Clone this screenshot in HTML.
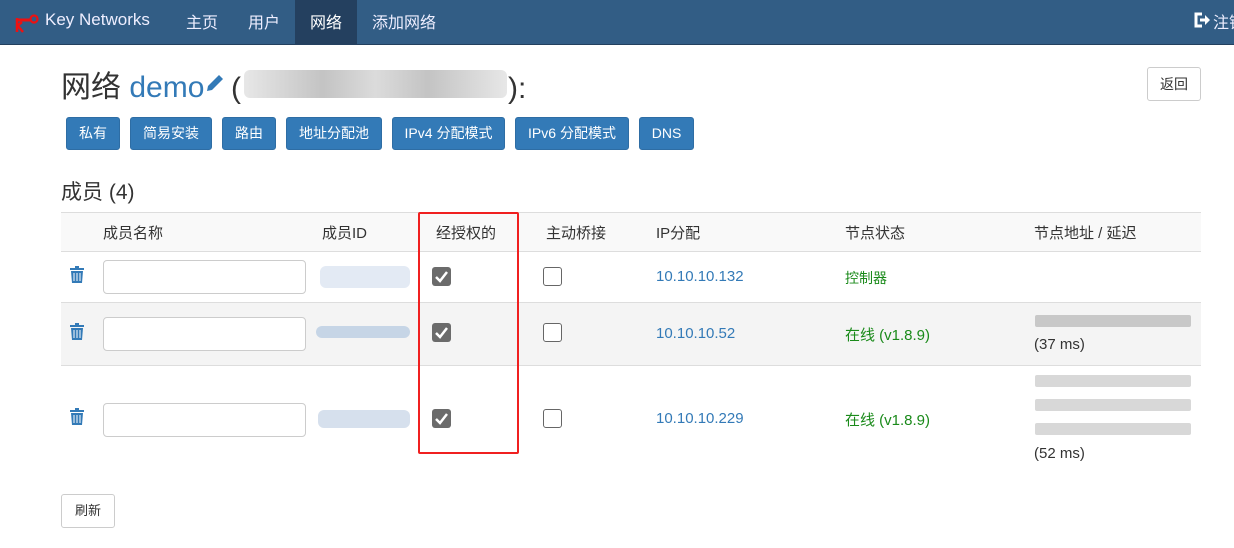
<!DOCTYPE html>
<html><head><meta charset="utf-8"><style>
*{box-sizing:border-box;margin:0;padding:0}
body{width:1234px;height:548px;overflow:hidden;background:#fff;font-family:"Liberation Sans","Noto Sans CJK SC",sans-serif;font-size:15px;color:#333;position:relative}
.a{position:absolute;white-space:nowrap}
.nav{position:absolute;left:0;top:0;width:1234px;height:45px;background:#325d85;border-bottom:1px solid #23405e}
.nav .t{position:absolute;top:9px;color:#eef;font-size:17px;white-space:nowrap}
.btn{position:absolute;top:117px;height:33px;background:#337ab7;border:1px solid #2e6da4;border-radius:3px;color:#fff;font-size:14px;text-align:center;line-height:31px}
.wb{position:absolute;background:#fff;border:1px solid #ccc;border-radius:3px;font-size:14px;text-align:center;color:#333}
.inp{position:absolute;left:103px;width:203px;height:34px;border:1px solid #ccc;border-radius:4px;background:#fff}
.cb{position:absolute;width:19px;height:19px;border-radius:3px}
.cb.on{background:#6b6b6b}
.cb.off{border:1.5px solid #666;background:#fff}
.blur{position:absolute;border-radius:6px}
.ip{position:absolute;color:#337ab7;font-size:15px}
.ok{position:absolute;color:#1a8a1a;font-size:15px}
.tr{position:absolute;left:69px}
.par{position:absolute;top:72px;font-size:30px;font-family:"Liberation Sans",sans-serif;line-height:34px}
</style></head><body>
<div class="nav">
<svg class="a" style="left:14px;top:12px" width="26" height="22" viewBox="0 0 26 22"><path d="M2 8h14" stroke="#e11" stroke-width="3"/><circle cx="20" cy="7" r="3.5" fill="none" stroke="#e11" stroke-width="2.2"/><path d="M3 6v14M3 14l5-4M4 14l5 6" stroke="#e11" stroke-width="2.5" fill="none"/></svg>
<div class="t" style="left:45px;top:10px">Key Networks</div>
<div class="t" style="left:186px;font-size:16px">主页</div>
<div class="t" style="left:248px;font-size:16px">用户</div>
<div style="position:absolute;left:295px;top:0;width:62px;height:45px;background:#24405f"></div>
<div class="t" style="left:310px;font-size:16px;color:#fff">网络</div>
<div class="t" style="left:372px;font-size:16px">添加网络</div>
<svg class="a" style="left:1193px;top:12px" width="18" height="16" viewBox="0 0 18 16"><path d="M9 2H3v12h6" fill="none" stroke="#fff" stroke-width="3"/><path d="M7 6.5h5V3l5 5-5 5V9.5H7z" fill="#fff"/></svg>
<div class="t" style="left:1213px;font-size:16px">注销</div>
</div>
<div class="a" style="left:61px;top:62px;font-size:30px;color:#333">网络 <span style="color:#337ab7">demo</span></div>
<svg class="a" style="left:204px;top:72px" width="22" height="22" viewBox="0 0 22 22"><path d="M3 19l1-5L15 3l4 4L8 18z" fill="#337ab7"/></svg>
<div class="par" style="left:231px">(</div>
<div class="blur" style="left:244px;top:70px;width:263px;height:28px;background:linear-gradient(90deg,#ddd,#aaa 30%,#ccc 50%,#aaa 70%,#ddd);opacity:.7"></div>
<div class="par" style="left:508px">):</div>
<div class="wb" style="left:1147px;top:67px;width:54px;height:34px;line-height:32px">返回</div>
<div class="btn" style="left:66px;width:54px">私有</div>
<div class="btn" style="left:130px;width:82px">简易安装</div>
<div class="btn" style="left:222px;width:54px">路由</div>
<div class="btn" style="left:286px;width:96px">地址分配池</div>
<div class="btn" style="left:392px;width:113px">IPv4 分配模式</div>
<div class="btn" style="left:515px;width:114px">IPv6 分配模式</div>
<div class="btn" style="left:639px;width:55px">DNS</div>
<div class="a" style="left:61px;top:176px;font-size:21px">成员 (4)</div>
<div style="position:absolute;left:61px;top:212px;width:1140px;height:40px;background:#f9f9f9;border-top:1px solid #ddd;border-bottom:1px solid #ddd"></div>
<div style="position:absolute;left:61px;top:302px;width:1140px;height:64px;background:#f4f4f4;border-top:1px solid #ddd;border-bottom:1px solid #ddd"></div>
<div class="a" style="left:103px;top:222px">成员名称</div>
<div class="a" style="left:322px;top:222px">成员ID</div>
<div class="a" style="left:436px;top:222px">经授权的</div>
<div class="a" style="left:546px;top:222px">主动桥接</div>
<div class="a" style="left:656px;top:222px">IP分配</div>
<div class="a" style="left:845px;top:222px">节点状态</div>
<div class="a" style="left:1034px;top:222px">节点地址 / 延迟</div>
<svg class="tr" style="top:266px" width="16" height="18" viewBox="0 0 16 18"><path d="M1 3h14M6 1h4" stroke="#337ab7" stroke-width="2"/><path d="M2 5h12l-1 12H3z" fill="#337ab7"/><path d="M5 7v8M8 7v8M11 7v8" stroke="#fff" stroke-width="1"/></svg>
<svg class="tr" style="top:323px" width="16" height="18" viewBox="0 0 16 18"><path d="M1 3h14M6 1h4" stroke="#337ab7" stroke-width="2"/><path d="M2 5h12l-1 12H3z" fill="#337ab7"/><path d="M5 7v8M8 7v8M11 7v8" stroke="#fff" stroke-width="1"/></svg>
<svg class="tr" style="top:408px" width="16" height="18" viewBox="0 0 16 18"><path d="M1 3h14M6 1h4" stroke="#337ab7" stroke-width="2"/><path d="M2 5h12l-1 12H3z" fill="#337ab7"/><path d="M5 7v8M8 7v8M11 7v8" stroke="#fff" stroke-width="1"/></svg>
<div class="inp" style="top:260px"></div>
<div class="inp" style="top:317px"></div>
<div class="inp" style="top:403px"></div>
<div class="blur" style="left:320px;top:266px;width:90px;height:22px;background:#e3eaf4"></div>
<div class="blur" style="left:316px;top:326px;width:94px;height:12px;background:#c6d5e6"></div>
<div class="blur" style="left:318px;top:410px;width:92px;height:18px;background:#d6e0ed"></div>
<svg class="cb on" style="left:432px;top:267px" viewBox="0 0 19 19"><path d="M4 10l4 4 7-9" stroke="#fff" stroke-width="2.5" fill="none"/></svg>
<svg class="cb on" style="left:432px;top:323px" viewBox="0 0 19 19"><path d="M4 10l4 4 7-9" stroke="#fff" stroke-width="2.5" fill="none"/></svg>
<svg class="cb on" style="left:432px;top:409px" viewBox="0 0 19 19"><path d="M4 10l4 4 7-9" stroke="#fff" stroke-width="2.5" fill="none"/></svg>
<div class="cb off" style="left:543px;top:267px"></div>
<div class="cb off" style="left:543px;top:323px"></div>
<div class="cb off" style="left:543px;top:409px"></div>
<div class="ip" style="top:268px;left:656px">10.10.10.132</div>
<div class="ip" style="top:325px;left:656px">10.10.10.52</div>
<div class="ip" style="top:410px;left:656px">10.10.10.229</div>
<div class="ok" style="top:268px;left:845px;font-size:14px">控制器</div>
<div class="ok" style="top:324px;left:845px">在线 (v1.8.9)</div>
<div class="ok" style="top:409px;left:845px">在线 (v1.8.9)</div>
<div class="blur" style="left:1035px;top:315px;width:156px;height:12px;background:#c8c8c8;border-radius:2px"></div>
<div class="a" style="left:1034px;top:336px">(37 ms)</div>
<div class="blur" style="left:1035px;top:375px;width:156px;height:12px;background:#d8d8d8;border-radius:2px"></div>
<div class="blur" style="left:1035px;top:399px;width:156px;height:12px;background:#d8d8d8;border-radius:2px"></div>
<div class="blur" style="left:1035px;top:423px;width:156px;height:12px;background:#d8d8d8;border-radius:2px"></div>
<div class="a" style="left:1034px;top:445px">(52 ms)</div>
<div style="position:absolute;left:418px;top:212px;width:101px;height:242px;border:2px solid #f02020;border-radius:2px"></div>
<div class="wb" style="left:61px;top:494px;width:54px;height:34px;line-height:32px;font-size:13px">刷新</div>
</body></html>
